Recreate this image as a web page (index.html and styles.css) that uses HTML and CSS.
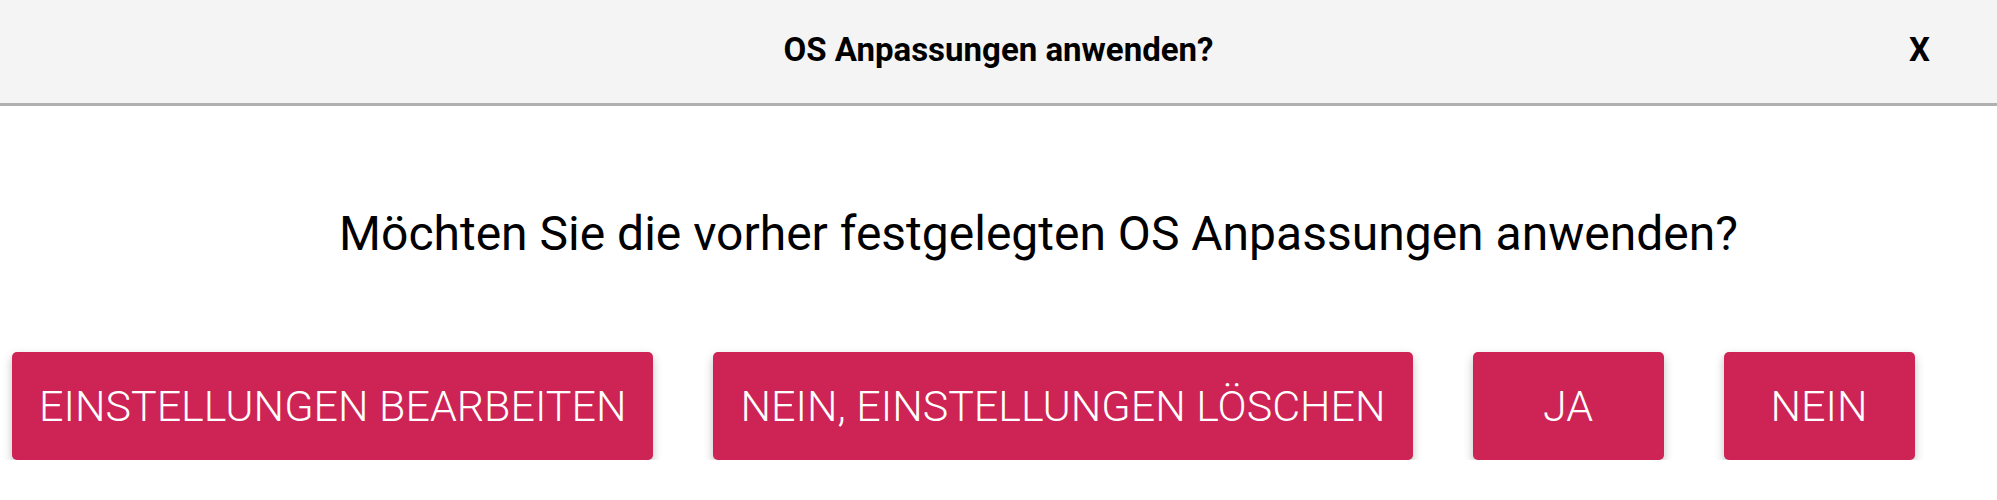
FILE: index.html
```html
<!DOCTYPE html>
<html lang="de">
<head>
  <meta charset="UTF-8">
  <title>OS Anpassungen anwenden?</title>
  <link rel="stylesheet" href="styles.css">
</head>
<body>

  <div class="dialog">
    <div class="dialog-header">
      <span></span>
      <h1>OS Anpassungen anwenden?</h1>
      <button class="close-btn" type="button">X</button>
    </div>

    <p class="question">Möchten Sie die vorher festgelegten OS Anpassungen anwenden?</p>

    <div class="actions">
      <button type="button" class="btn">Einstellungen bearbeiten</button>
      <button type="button" class="btn">Nein, Einstellungen löschen</button>
      <button type="button" class="btn">Ja</button>
      <button type="button" class="btn">Nein</button>
    </div>
  </div>

</body>
</html>
```

FILE: styles.css
```css
body {
  margin: 0;
  font-family: Roboto, "Liberation Sans", Arial, sans-serif;
  background-color: white;
  color: black;
}

.dialog-header {
  height: 103px;
  background-color: #f4f4f4;
  border-bottom: 3px solid #b0b0b0;
  display: grid;
  grid-template-columns: 1fr auto 1fr;
  align-items: center;
}
.dialog-header h1 {
  margin: 0;
  font-size: 33px;
  font-weight: bold;
  padding-bottom: 4px;
}
.close-btn {
  justify-self: end;
  margin-right: 67px;
  padding: 0;
  border: none;
  background: none;
  font-family: inherit;
  font-size: 33px;
  font-weight: bold;
  color: black;
  padding-bottom: 4px;
  cursor: pointer;
}

.question {
  margin: 100px 0 0 0;
  padding-left: 80px;
  font-size: 48px;
  line-height: 56px;
  text-align: center;
}

.actions {
  display: flex;
  gap: 60px;
  margin-top: 90px;
  padding-left: 12px;
}
.btn {
  height: 108px;
  min-width: 191px;
  padding: 0 27px;
  border: none;
  border-radius: 5px;
  background-color: #cd2355;
  color: white;
  font-family: inherit;
  font-size: 43px;
  font-weight: 300;
  text-transform: uppercase;
  box-shadow: 0 4px 10px rgba(0, 0, 0, 0.25);
  cursor: pointer;
}
.btn:hover {
  background-color: #b81d4a;
}
```
